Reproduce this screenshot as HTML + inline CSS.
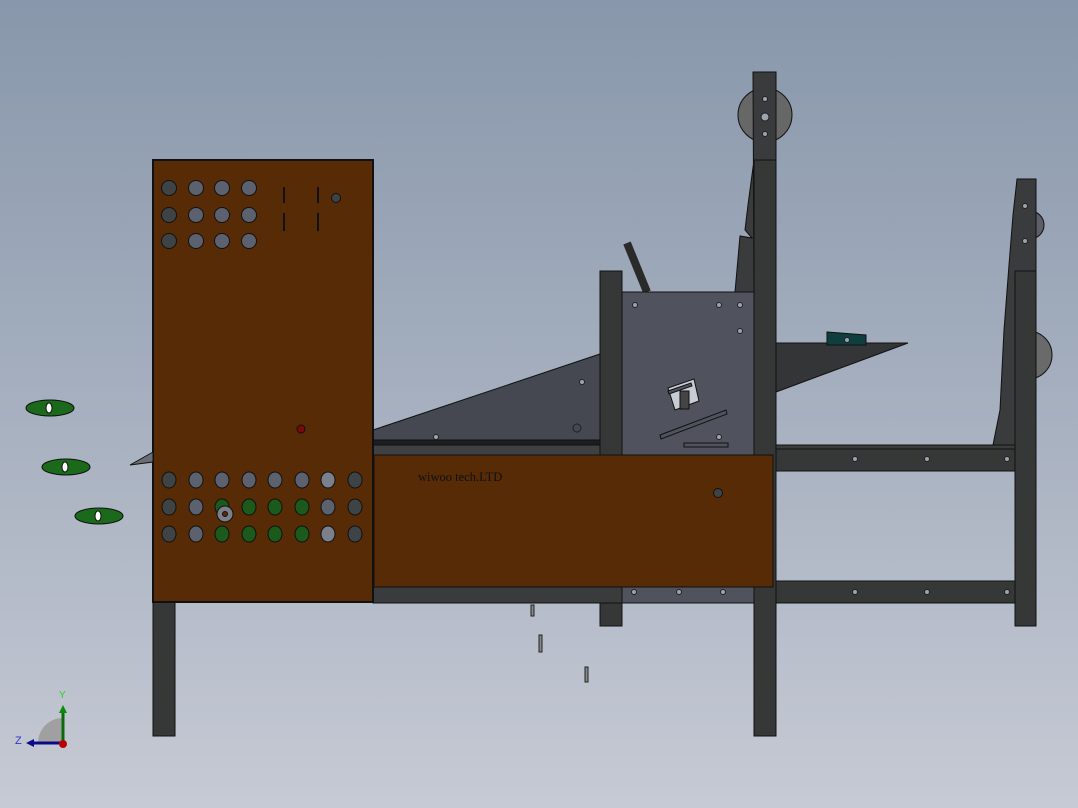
<!DOCTYPE html>
<html><head><meta charset="utf-8"><style>
html,body{margin:0;padding:0;width:1078px;height:808px;overflow:hidden}
body{background:linear-gradient(#8897ab 0%,#a3adbd 45%,#c6cad4 100%)}
svg{display:block}
</style></head><body>
<svg width="1078" height="808" viewBox="0 0 1078 808" xmlns="http://www.w3.org/2000/svg">
<g stroke="#111" stroke-width="1">
<!-- right far frame -->
<circle cx="1030" cy="225" r="14" fill="#5c5e68"/>
<circle cx="1028" cy="355" r="24" fill="#6a6a6a"/>
<polygon points="1017,179 1036,179 1036,445 993,445 1000,410 1004,330 1009,265 1013,215" fill="#3a3b3c"/>
<rect x="776" y="445" width="239" height="4" fill="#3a3b3c"/>
<rect x="776" y="449" width="239" height="22" fill="#363838"/>
<rect x="776" y="581" width="239" height="22" fill="#363838"/>
<rect x="1015" y="271" width="21" height="355" fill="#363838"/>
<!-- hopper left triangle -->
<polygon points="373,430 600,354 600,445 373,445" fill="#454851"/>
<rect x="373" y="440" width="227" height="5" fill="#1d1e20"/>
<rect x="373" y="445" width="227" height="10" fill="#3e4042"/>
<!-- right triangle plate -->
<polygon points="776,343 908,343 776,392" fill="#343536"/>
<polygon points="827,332 866,335 866,345 827,345" fill="#0f3e3e"/>
<!-- tall column top with pulley -->
<circle cx="765" cy="115" r="27" fill="#676767"/>
<polygon points="753,72 776,72 776,160 754,160 748,205 745,230 752,238 740,236 735,292 754,292" fill="#3a3b3c"/>
<!-- gray panel -->
<line x1="627" y1="243" x2="647" y2="292" stroke="#2a2a2a" stroke-width="8"/>
<rect x="622" y="292" width="132" height="163" fill="#50535e"/>
<polygon points="668,388 694,379 699,401 675,410" fill="#c8ccd4"/>
<rect x="680" y="391" width="9" height="18" fill="#444"/>
<polygon points="660,435 726,410 727,414 661,439" fill="#50535e"/>
<polygon points="668,391 691,383 692,386 669,394" fill="#50535e"/>
<rect x="684" y="443" width="44" height="4" fill="#50535e"/>
<rect x="600" y="271" width="22" height="355" fill="#363838"/>
<rect x="754" y="160" width="22" height="576" fill="#363838"/>
<!-- bottom rail -->
<rect x="373" y="587" width="381" height="16" fill="#393b3c"/>
<rect x="622" y="587" width="132" height="16" fill="#50535e"/>
<!-- front box -->
<rect x="374" y="455" width="399" height="132" fill="#562b05"/>
<!-- cabinet -->
<rect x="153" y="602" width="22" height="134" fill="#363838"/>
<rect x="153" y="160" width="220" height="442" fill="#562b05" stroke-width="2"/>
<polygon points="153,452 130,465 153,462" fill="#6a6d75"/>
</g>
<g fill="#9aa3b0" stroke="#222" stroke-width="1">
<circle cx="436" cy="437" r="2.5"/><circle cx="582" cy="382" r="2.5"/><circle cx="577" cy="428" r="4" fill="none"/>
<circle cx="635" cy="305" r="2.5"/><circle cx="719" cy="305" r="2.5"/><circle cx="740" cy="305" r="2.5"/><circle cx="740" cy="331" r="2.5"/><circle cx="719" cy="437" r="2.5"/>
<circle cx="765" cy="99" r="2.5"/><circle cx="765" cy="117" r="4"/><circle cx="765" cy="134" r="2.5"/>
<circle cx="1025" cy="206" r="2.5"/><circle cx="1025" cy="241" r="2.5"/>
<circle cx="855" cy="459" r="2.5"/><circle cx="927" cy="459" r="2.5"/><circle cx="1007" cy="459" r="2.5"/>
<circle cx="855" cy="592" r="2.5"/><circle cx="927" cy="592" r="2.5"/><circle cx="1007" cy="592" r="2.5"/>
<circle cx="634" cy="592" r="2.5"/><circle cx="679" cy="592" r="2.5"/><circle cx="723" cy="592" r="2.5"/>
<circle cx="847" cy="340" r="2.5"/>
</g>
<g stroke="#111" stroke-width="1" fill="#5c6170">
<circle cx="169" cy="188" r="7.5" fill="#3e4446"/><circle cx="196" cy="188" r="7.5"/><circle cx="222" cy="188" r="7.5"/><circle cx="249" cy="188" r="7.5"/>
<circle cx="169" cy="215" r="7.5" fill="#3e4446"/><circle cx="196" cy="215" r="7.5"/><circle cx="222" cy="215" r="7.5"/><circle cx="249" cy="215" r="7.5"/>
<circle cx="169" cy="241" r="7.5" fill="#3e4446"/><circle cx="196" cy="241" r="7.5"/><circle cx="222" cy="241" r="7.5"/><circle cx="249" cy="241" r="7.5"/>
<circle cx="336" cy="198" r="4.5" fill="#3e4446"/>
<circle cx="718" cy="493" r="4.5" fill="#3e4446"/>
<circle cx="301" cy="429" r="4" fill="#7a0a0a"/>
</g>
<g stroke="#111" stroke-width="2"><line x1="284" y1="187" x2="284" y2="203"/><line x1="318" y1="187" x2="318" y2="203"/><line x1="284" y1="213" x2="284" y2="231"/><line x1="318" y1="213" x2="318" y2="231"/></g>
<g stroke="#111" stroke-width="1" fill="#5c6170">
<ellipse cx="169" cy="480" rx="7" ry="8" fill="#3e4446"/><ellipse cx="196" cy="480" rx="7" ry="8"/><ellipse cx="222" cy="480" rx="7" ry="8"/><ellipse cx="249" cy="480" rx="7" ry="8"/><ellipse cx="275" cy="480" rx="7" ry="8"/><ellipse cx="302" cy="480" rx="7" ry="8"/><ellipse cx="328" cy="480" rx="7" ry="8" fill="#7a808c"/><ellipse cx="355" cy="480" rx="7" ry="8" fill="#3e4446"/>
<ellipse cx="169" cy="507" rx="7" ry="8" fill="#3e4446"/><ellipse cx="196" cy="507" rx="7" ry="8"/><ellipse cx="222" cy="507" rx="7" ry="8" fill="#1b5a1b"/><ellipse cx="249" cy="507" rx="7" ry="8" fill="#1b5a1b"/><ellipse cx="275" cy="507" rx="7" ry="8" fill="#1b5a1b"/><ellipse cx="302" cy="507" rx="7" ry="8" fill="#1b5a1b"/><ellipse cx="328" cy="507" rx="7" ry="8"/><ellipse cx="355" cy="507" rx="7" ry="8" fill="#3e4446"/>
<ellipse cx="169" cy="534" rx="7" ry="8" fill="#3e4446"/><ellipse cx="196" cy="534" rx="7" ry="8"/><ellipse cx="222" cy="534" rx="7" ry="8" fill="#1b5a1b"/><ellipse cx="249" cy="534" rx="7" ry="8" fill="#1b5a1b"/><ellipse cx="275" cy="534" rx="7" ry="8" fill="#1b5a1b"/><ellipse cx="302" cy="534" rx="7" ry="8" fill="#1b5a1b"/><ellipse cx="328" cy="534" rx="7" ry="8" fill="#7a808c"/><ellipse cx="355" cy="534" rx="7" ry="8" fill="#3e4446"/>
<circle cx="225" cy="514" r="8" fill="#7a7f88"/><circle cx="225" cy="514" r="2.5" fill="#562b05"/>
</g>
<g fill="#1b6a1b" stroke="#111" stroke-width="1">
<ellipse cx="50" cy="408" rx="24" ry="8"/><ellipse cx="66" cy="467" rx="24" ry="8"/><ellipse cx="99" cy="516" rx="24" ry="8"/>
</g>
<g fill="#fff" stroke="#111"><ellipse cx="49" cy="408" rx="3" ry="5"/><ellipse cx="65" cy="467" rx="3" ry="5"/><ellipse cx="98" cy="516" rx="3" ry="5"/></g>
<text x="418" y="481" font-family="Liberation Serif, serif" font-size="12.5" fill="#111">wiwoo tech.LTD</text>
<g fill="#888" stroke="#222"><rect x="531" y="605" width="3" height="11"/><rect x="539" y="635" width="3" height="17"/><rect x="585" y="667" width="3" height="15"/></g>
<!-- triad -->
<path d="M38,743 A25,25 0 0 1 62,718 L62,743 Z" fill="#a0a0a0"/>
<line x1="63" y1="743" x2="63" y2="712" stroke="#0a6a0a" stroke-width="3"/>
<polygon points="59,713 67,713 63,705" fill="#0a8a0a"/>
<line x1="63" y1="743" x2="34" y2="743" stroke="#0b0b8a" stroke-width="3"/>
<polygon points="34,739 34,747 26,743" fill="#0b0b8a"/>
<circle cx="63" cy="744" r="4" fill="#b00"/>
<text x="59" y="698" font-family="Liberation Sans, sans-serif" font-size="10" fill="#3c3">Y</text>
<text x="15" y="744" font-family="Liberation Sans, sans-serif" font-size="11" fill="#33c">Z</text>
</svg>
</body></html>
